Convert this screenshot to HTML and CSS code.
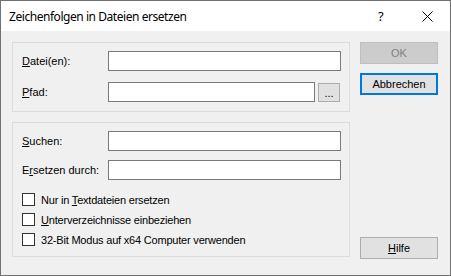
FILE: index.html
```html
<!DOCTYPE html>
<html lang="de">
<head>
    <meta charset="UTF-8">
    <title>Zeichenfolgen in Dateien ersetzen</title>
    <link rel="stylesheet" href="styles.css">
</head>
<body>
    <div class="window">
        <div class="titlebar">
            <span class="title">Zeichenfolgen in Dateien ersetzen</span>
            <span class="help-icon">?</span>
            <svg class="close-icon" width="11" height="11" viewBox="0 0 11 11">
                <path d="M0.5 0.5 L10.5 10.5 M10.5 0.5 L0.5 10.5" stroke="#000" stroke-width="1" fill="none"/>
            </svg>
        </div>
        <div class="content">
            <div class="groups">
                <div class="group group-files">
                    <div class="row">
                        <label class="field-label"><u>D</u>atei(en):</label>
                        <input class="textbox" type="text">
                    </div>
                    <div class="row">
                        <label class="field-label"><u>P</u>fad:</label>
                        <input class="textbox textbox-short" type="text">
                        <button class="browse-button">...</button>
                    </div>
                </div>
                <div class="group group-search">
                    <div class="row">
                        <label class="field-label"><u>S</u>uchen:</label>
                        <input class="textbox" type="text">
                    </div>
                    <div class="row row-tight">
                        <label class="field-label">E<u>r</u>setzen durch:</label>
                        <input class="textbox" type="text">
                    </div>
                    <div class="checks">
                        <label class="check"><span class="box"></span><span>Nur in <u>T</u>extdateien ersetzen</span></label>
                        <label class="check"><span class="box"></span><span><u>U</u>nterverzeichnisse einbeziehen</span></label>
                        <label class="check"><span class="box"></span><span>32-Bit Modus auf x64 Computer verwenden</span></label>
                    </div>
                </div>
            </div>
            <div class="buttons">
                <button class="button button-disabled">OK</button>
                <button class="button button-focus">Abbrechen</button>
                <button class="button button-help"><u>H</u>ilfe</button>
            </div>
        </div>
    </div>
</body>
</html>
```

FILE: styles.css
```css
/* dialog window */
body, html {
    margin: 0;
    padding: 0;
    background-color: #ffffff;
}

.window {
    width: 451px;
    height: 276px;
    box-sizing: border-box;
    border: 1px solid #717171;
    display: flex;
    flex-direction: column;
    font-family: 'Liberation Sans', Arial, sans-serif;
    font-size: 11px;
    color: #000;
}

.titlebar {
    height: 30px;
    background-color: #fff;
    display: flex;
    align-items: center;
    position: relative;
}

.title {
    font-family: 'Noto Sans', sans-serif;
    font-size: 12px;
    letter-spacing: -0.45px;
    margin-left: 8px;
    margin-top: 1px;
}

.help-icon {
    position: absolute;
    left: 377px;
    top: 6px;
    font-family: 'Noto Sans', sans-serif;
    font-size: 13px;
}

.close-icon {
    position: absolute;
    left: 421px;
    top: 10px;
}

.content {
    flex: 1;
    background-color: #f0f0f0;
    display: flex;
    padding: 11px 11px 0 11px;
    gap: 10px;
}

.groups {
    display: flex;
    flex-direction: column;
    gap: 10px;
}

.group {
    width: 338px;
    box-sizing: border-box;
    border: 1px solid #dcdcdc;
    padding: 8px 7px 0 9px;
}

.group-files {
    height: 70px;
}

.group-search {
    height: 135px;
}

.row {
    display: flex;
    align-items: center;
    height: 20px;
    margin-bottom: 11px;
}

.row-tight {
    margin-bottom: 0;
}

.group-search .row:first-child {
    margin-bottom: 9px;
}

.field-label {
    width: 86px;
}

u {
    text-decoration: underline;
    text-underline-offset: 1px;
}

.textbox {
    width: 233px;
    height: 20px;
    box-sizing: border-box;
    border: 1px solid #7a7a7a;
    background: #fff;
    margin: 0;
    padding: 0 2px;
}

.textbox-short {
    width: 207px;
}

.browse-button {
    width: 22px;
    height: 19px;
    margin: 1px 0 0 3px;
    box-sizing: border-box;
    border: 1px solid #adadad;
    background: #e1e1e1;
    font-family: 'Liberation Sans', Arial, sans-serif;
    font-size: 11px;
    padding: 0;
    line-height: 19px;
}

.checks {
    display: flex;
    flex-direction: column;
    gap: 7px;
    margin-top: 13px;
}

.check {
    display: flex;
    align-items: center;
    height: 13px;
    letter-spacing: -0.2px;
}

.box {
    width: 13px;
    height: 13px;
    box-sizing: border-box;
    border: 1px solid #333;
    background: #fff;
    margin-right: 6px;
}

.buttons {
    display: flex;
    flex-direction: column;
    width: 78px;
}

.button {
    width: 78px;
    height: 22px;
    box-sizing: border-box;
    border: 1px solid #adadad;
    background: #e1e1e1;
    font-family: 'Liberation Sans', Arial, sans-serif;
    font-size: 11px;
    color: #000;
    padding: 0;
}

.button-disabled {
    background: #cccccc;
    border-color: #bfbfbf;
    color: #838383;
}

.button-focus {
    border: 2px solid #0078d7;
    margin-top: 9px;
}

.button-help {
    margin-top: auto;
    margin-bottom: 16px;
}
```
